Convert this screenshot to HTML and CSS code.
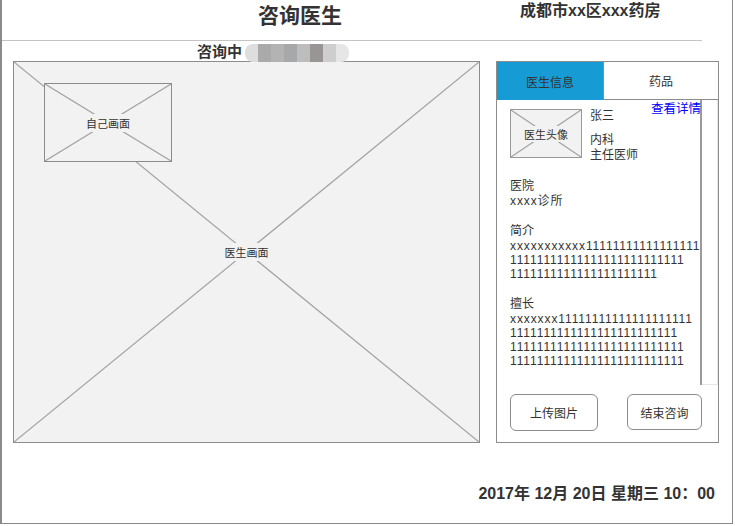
FILE: index.html
```html
<!DOCTYPE html>
<html lang="zh-CN">
<head>
<meta charset="utf-8">
<title>咨询医生</title>
<link rel="stylesheet" href="styles.css">
</head>
<body>
<div class="page">
  <header class="header">
    <h1 class="title">咨询医生</h1>
    <div class="store">成都市xx区xxx药房</div>
  </header>
  <div class="status">
    <span class="status-text">咨询中</span>
    <span class="mosaic"><i class="m1"></i><i class="m2"></i><i class="m3"></i><i class="m4"></i><i class="m5"></i><i class="m6"></i><i class="m7"></i><i class="m8"></i></span>
  </div>
  <main class="main">
    <section class="video">
      <svg class="cross" viewBox="0 0 100 100" preserveAspectRatio="none"><line x1="0" y1="0" x2="100" y2="100"/><line x1="100" y1="0" x2="0" y2="100"/></svg>
      <span class="ph-label">医生画面</span>
      <div class="self-view">
        <svg class="cross" viewBox="0 0 100 100" preserveAspectRatio="none"><line x1="0" y1="0" x2="100" y2="100"/><line x1="100" y1="0" x2="0" y2="100"/></svg>
        <span class="ph-label">自己画面</span>
      </div>
    </section>
    <aside class="panel">
      <div class="tabs">
        <div class="tab active">医生信息</div>
        <div class="tab">药品</div>
      </div>
      <div class="info-wrap">
        <div class="info">
          <div class="doc-row">
            <div class="avatar">
              <svg class="cross" viewBox="0 0 100 100" preserveAspectRatio="none"><line x1="0" y1="0" x2="100" y2="100"/><line x1="100" y1="0" x2="0" y2="100"/></svg>
              <span class="ph-label">医生头像</span>
            </div>
            <div class="doc-meta">
              <div class="doc-name">张三</div>
              <div class="doc-dept">内科<br>主任医师</div>
            </div>
          </div>
          <div class="section"><div class="sec-title">医院</div><div class="sec-text">xxxx诊所</div></div>
          <div class="section"><div class="sec-title">简介</div><div class="sec-text">xxxxxxxxxxx11111111111111111<br>11111111111111111111111111<br>1111111111111111111111</div></div>
          <div class="section"><div class="sec-title">擅长</div><div class="sec-text">xxxxxxx11111111111111111111<br>1111111111111111111111111<br>11111111111111111111111111<br>11111111111111111111111111</div></div>
        </div>
        <div class="scrolltrack"></div>
        <a class="detail-link" href="#">查看详情</a>
      </div>
      <div class="actions">
        <button class="btn btn-upload">上传图片</button>
        <button class="btn btn-end">结束咨询</button>
      </div>
    </aside>
  </main>
  <footer class="footer">2017年 12月 20日 星期三 10：00</footer>
</div>
</body>
</html>
```
FILE: styles.css
```css
* { box-sizing: border-box; }
html, body { margin: 0; padding: 0; background: #fff; }
body {
  font-family: "Liberation Sans", "Noto Sans CJK SC", sans-serif;
  color: #333;
}
.page {
  width: 733px;
  height: 524px;
  border-left: 2px solid #8a8a8a;
  border-right: 1px solid #8a8a8a;
  border-bottom: 1px solid #8a8a8a;
  display: flex;
  flex-direction: column;
}
.header {
  width: 700px;
  height: 41px;
  border-bottom: 1px solid #c4c4c4;
  display: flex;
  align-items: flex-start;
  padding-left: 251px;
}
.title {
  margin: 0;
  width: 94px;
  text-align: center;
  white-space: nowrap;
  font-size: 21px;
  line-height: 28px;
  font-weight: bold;
  font-family: "Noto Sans CJK SC", sans-serif;
  color: #333;
}
.store {
  margin-left: 173px;
  margin-top: 0;
  font-size: 16px;
  line-height: 22px;
  font-weight: bold;
  white-space: nowrap;
  font-family: "Liberation Sans", "Noto Sans CJK SC", sans-serif;
}
.status {
  height: 20px;
  padding-left: 195px;
  display: flex;
  align-items: flex-start;
  position: relative;
  z-index: 1;
}
.status-text {
  font-size: 15px;
  line-height: 20px;
  font-weight: bold;
  font-family: "Noto Sans CJK SC", sans-serif;
}
.mosaic {
  display: flex;
  margin-top: 3px;
  margin-left: 3px;
  height: 18px;
  border-radius: 8px;
  overflow: hidden;
  filter: blur(0.7px);
}
.mosaic i { display: block; width: 13px; height: 18px; }
.mosaic .m1 { background: #dedede; }
.mosaic .m2 { background: #aaaaaa; }
.mosaic .m3 { background: #b3b3b3; }
.mosaic .m4 { background: #a6a8aa; }
.mosaic .m5 { background: #bdbdbd; }
.mosaic .m6 { background: #999595; }
.mosaic .m7 { background: #cecece; }
.mosaic .m8 { background: #e6e6e6; }

.main {
  display: flex;
  padding-left: 11px;
  gap: 16px;
  height: 382px;
}
.video {
  width: 467px;
  height: 382px;
  background: #f2f2f2;
  border: 1px solid #8c8c8c;
  position: relative;
  display: flex;
  align-items: center;
  justify-content: center;
}
.cross {
  position: absolute;
  left: 0; top: 0;
  width: 100%; height: 100%;
}
.cross line {
  stroke: #a3a3a3;
  stroke-width: 1.2;
  vector-effect: non-scaling-stroke;
}
.ph-label {
  position: relative;
  font-size: 11px;
  line-height: 14px;
  background: #f2f2f2;
  padding: 2px 3px;
  color: #333;
  font-family: "Noto Sans CJK SC", sans-serif;
}
.self-view {
  position: absolute;
  left: 30px;
  top: 21px;
  width: 128px;
  height: 79px;
  background: #f2f2f2;
  border: 1px solid #8c8c8c;
  display: flex;
  align-items: center;
  justify-content: center;
}
.panel {
  width: 223px;
  height: 382px;
  border: 1px solid #8c8c8c;
  display: flex;
  flex-direction: column;
}
.tabs {
  display: flex;
  height: 38px;
}
.tab {
  display: flex;
  align-items: center;
  justify-content: center;
  font-size: 12px;
  font-family: "Noto Sans CJK SC", sans-serif;
  color: #333;
}
.tab.active {
  width: 106px;
  background: #169bd5;
}
.tab:not(.active) {
  flex: 1;
  border-left: 1px solid #8c8c8c;
  border-bottom: 1px solid #8c8c8c;
}
.info-wrap {
  display: flex;
  height: 285px;
  position: relative;
}
.info {
  width: 205px;
  border-right: 2px solid #9a9a9a;
  padding: 9px 0 0 13px;
  font-size: 12px;
  line-height: 14px;
  overflow: hidden;
  white-space: nowrap;
}
.scrolltrack {
  width: 16px;
  border-right: 1px solid #e6e6e6;
  border-bottom: 1px solid #e6e6e6;
}
.detail-link {
  position: absolute;
  right: 17px;
  top: 0;
  font-size: 12.5px;
  line-height: 15px;
  color: #0000ff;
  text-decoration: none;
  font-family: "Noto Sans CJK SC", sans-serif;
}
.doc-row {
  display: flex;
  gap: 8px;
}
.avatar {
  width: 72px;
  height: 49px;
  background: #f2f2f2;
  border: 1px solid #999;
  position: relative;
  display: flex;
  align-items: center;
  justify-content: center;
}
.avatar .ph-label {
  font-size: 11px;
  padding: 1px 1px;
}
.doc-meta {
  line-height: 15px;
}
.doc-dept { margin-top: 9px; }
.section { margin-top: 16px; }
.doc-row + .section { margin-top: 16px; }
.sec-title { line-height: 15px; }
.sec-text { letter-spacing: 0.9px; line-height: 14px; }
.actions {
  display: flex;
  padding: 9px 0 0 13px;
  gap: 29px;
}
.btn {
  height: 37px;
  border: 1px solid #8c8c8c;
  border-radius: 6px;
  background: #fff;
  font-size: 12px;
  color: #333;
  font-family: "Noto Sans CJK SC", sans-serif;
  padding: 0;
}
.btn-upload { width: 88px; }
.btn-end { width: 75px; height: 36px; }
.footer {
  margin-top: 41px;
  padding-right: 17px;
  text-align: right;
  font-size: 16px;
  line-height: 20px;
  font-weight: bold;
  white-space: nowrap;
}
```
